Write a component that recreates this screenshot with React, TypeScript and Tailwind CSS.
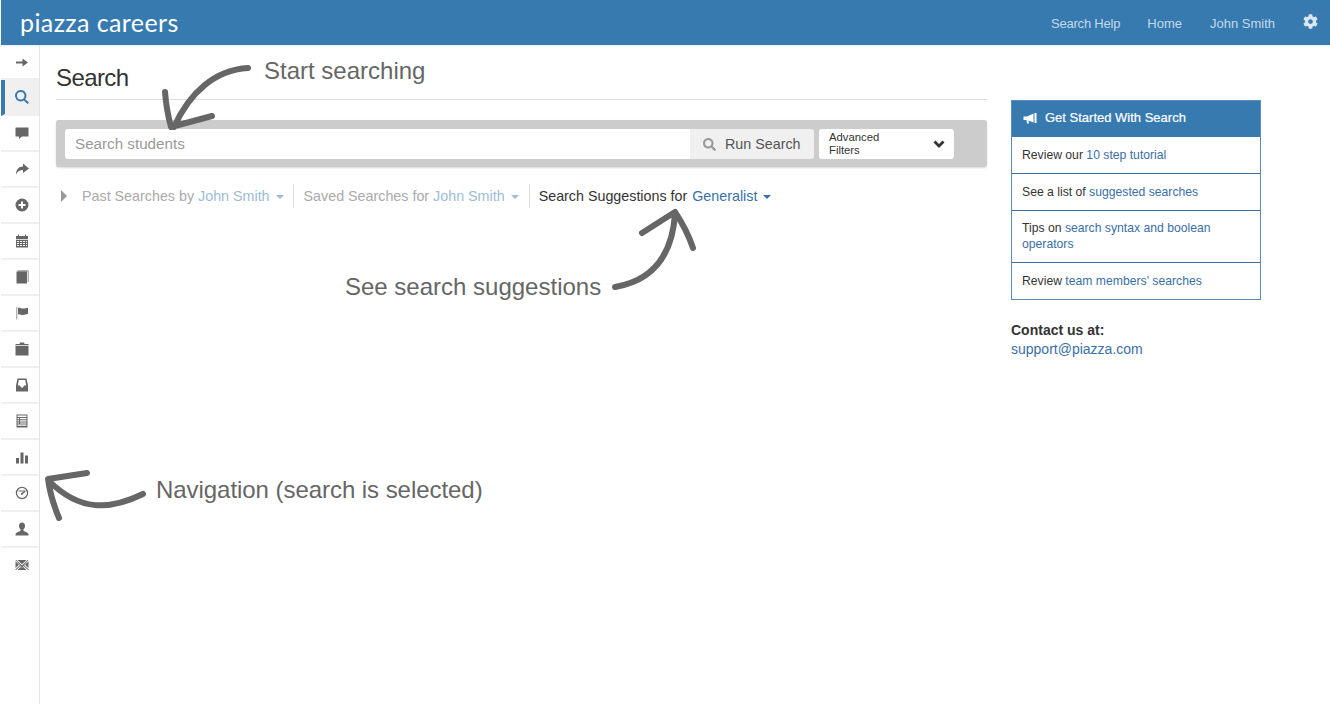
import { FaCog, FaSearch } from 'react-icons/fa';

const Icon = ({ d, active }: { d: string; active?: boolean }) => (
    <svg width="14" height="14" viewBox="0 0 14 14" className={active ? 'text-[#377ab0]' : 'text-[#666666]'}>
        <path d={d} fill="currentColor" fillRule="evenodd" />
    </svg>
);

const navIcons = [
    'M1 5.500h6.500V2.500l5.500 4-5.500 4V7.500H1z',
    'M5.700 0a5.700 5.700 0 0 1 4.500 9.200L14 12.600 12.500 14 8.800 10.500A5.700 5.700 0 1 1 5.700 0zm0 2a3.700 3.700 0 1 0 0 7.400 3.700 3.700 0 0 0 0-7.400z',
    'M1 1.500h12a.5.5 0 0 1 .5.5v8a.5.500 0 0 1-.5.500H7L4 13v-2.500H1a.5.500 0 0 1-.5-.500V2a.5.500 0 0 1 .5-.500z',
    'M8 1.500 14 6.500 8 11V8C5 8 2.500 9 1 12.500 1 8 3.500 4.500 8 4.500z',
    'M7 .5a6.500 6.500 0 1 1 0 13 6.500 6.500 0 0 1 0-13zM6 3.500V6H3.500v2H6v2.500h2V8h2.500V6H8V3.500z',
    'M1 2h2V.5h1V2h6V.5h1V2h2v3H1zM1 5.700h12V13.500H1zM2 7v1h2V7zm3 0v1h2V7zm3 0v1h2V7zm3 0v1h1V7zM2 9v1h2V9zm3 0v1h2V9zm3 0v1h2V9zm3 0v1h1V9zM2 11v1h2v-1zm3 0v1h2v-1zm3 0v1h2v-1zm3 0v1h1v-1z',
    'M2.500.5H13.500V12h-.7V1.200H2.500zM1.500 1.500h10.500v12H1.500z',
    'M1.500 1h.7v12.500h-.7zM3 2c2-1 3.500 1 6 .5 1-.2 2-.5 4-.8v6.300c-2 .3-3 .7-4.500 1C6 9.500 5 7.500 3 8.500z',
    'M5 .5h4l.5 1.500H13.500v1H.5V2h4zM.5 3.700h13V13.500H.5z',
    'M1 7.500 2.500.5h9L13 7.500V13.500H1zM3.800 2 2.800 7.500H5L6 9.500H8L9 7.500h2.200L10.200 2z',
    'M1.500.5h11V13.500H1.500zM2.500 1.500V3h9V1.500zM2.500 4v1.200h1.500V4zm2.500 0v1.200h6.500V4zM2.500 6.200v1.200h1.500V6.200zm2.500 0v1.200h6.500V6.200zM2.500 8.400v1.200h1.500V8.400zm2.500 0v1.200h6.500V8.400zM2.500 10.600v1.200h9v-1.200z',
    'M1 8h3v5.500H1zM5.500 2.500h3v11h-3zM10 5.500h3v8h-3z',
    'M7 .8a6.200 6.200 0 1 1 0 12.400A6.200 6.200 0 0 1 7 .8zm0 1.300a4.900 4.900 0 1 0 0 9.800 4.900 4.900 0 0 0 0-9.800zM3.500 4.500h7v1.200L7.800 8a1 1 0 1 1-1.300-.9L9 5.500H3.500z',
    'M7 .5c2 0 3 1.500 3 3.500 0 1.500-.7 2.700-1.500 3.300V9c2 .6 4.500 1.500 5 3.200v1.300H.5v-1.300C1 10.500 3.500 9.600 5.500 9V7.300C4.700 6.700 4 5.500 4 4 4 2 5 .5 7 .5z',
    'M.5 2h.8L7 7.500 12.700 2h.8L9 7.300l4.500 3.900v.8H13L8.500 8 7 9.500 5.500 8 1 12H.5v-.8l4.500-3.900zM2.500 2h9L7 6.300zM.5 3.200 4 6.800.5 10zM13.500 3.200V10L10 6.800zM2.500 12 6 8.800 7 10l1-1.200L11.500 12z',
];

const Caret = ({ className }: { className: string }) => (
    <span className={`inline-block w-0 h-0 border-x-[4px] border-x-transparent border-t-[4px] ml-[6px] align-middle ${className}`} />
);

const App = () => {
    return (
        <div className="relative h-[704px] w-[1330px] overflow-hidden bg-white pl-px font-['Liberation_Sans',sans-serif]">
            <header className="flex h-[45px] items-center justify-between bg-[#377ab0] pl-[19px] pr-[12px] shadow-[0_1px_2px_rgba(0,0,0,0.08)]">
                <span className="font-['Lato',sans-serif] text-[25px] font-normal leading-none tracking-[0.4px] text-white">piazza careers</span>
                <nav className="flex items-center pt-[2px] text-[13px] text-[#c4d8e8]">
                    <span className="tracking-[-0.2px]">Search Help</span>
                    <span className="ml-[27px]">Home</span>
                    <span className="ml-[28px]">John Smith</span>
                    <FaCog className="ml-[28px] mb-[5px] text-[15px] text-[#dbe7f1]" />
                </nav>
            </header>

            <div className="flex h-[659px]">
                <aside className="w-[39px] shrink-0 border-r border-[#e3e3e3]">
                    {navIcons.map((d, i) => (
                        <div
                            key={i}
                            className={`flex items-center justify-center border-b-2 border-[#efefef] last:border-b-0 last:pb-[2px] ${i === 0 ? 'h-[35px] pl-[3px] pt-[2px]' : 'h-[36px]'} ${i === 1 ? 'border-l-[4px] border-l-[#377ab0] bg-[#f0f0f0]' : 'pl-[3px]'}`}
                        >
                            <Icon d={d} active={i === 1} />
                        </div>
                    ))}
                </aside>

                <main className="flex flex-1 pl-[16px]">
                    <div className="w-[931px]">
                        <h1 className="flex h-[55px] items-end border-b border-[#dddddd] pb-[9px] text-[24px] leading-none tracking-[-0.6px] text-[#333333]">Search</h1>

                        <div className="mt-[20px] flex h-[47px] items-center rounded-[3px] bg-[#cccccc] px-[9px] shadow-[0_1px_2px_rgba(0,0,0,0.15)]">
                            <div className="flex h-[30px] w-[625px] items-center rounded-l-[3px] bg-white pl-[10px] pt-[1px] text-[15.200px] text-[#999999]">Search students</div>
                            <div className="flex h-[30px] w-[124px] items-center rounded-r-[3px] bg-[#f0f0f0] pl-[13px] pt-[2px] text-[14.300px] text-[#555555]">
                                <FaSearch className="mr-[9px] text-[13px] text-[#999999]" />
                                Run Search
                            </div>
                            <div className="ml-[5px] flex h-[30px] w-[135px] items-center justify-between rounded-[3px] bg-white pl-[10px] pr-[9px] text-[11.300px] leading-[13px] text-[#333333]">
                                <span className="w-[70px]">Advanced Filters</span>
                                <svg width="12" height="10" viewBox="0 0 12 10" fill="none" stroke="#333333" strokeWidth="2.800">
                                    <path d="M1.500 2.500 6 7l4.500-4.500" />
                                </svg>
                            </div>
                        </div>

                        <div className="mt-[17px] flex h-[24px] items-center text-[14.300px] text-[#aaaaaa]">
                            <span className="ml-[5px] mr-[15px] h-0 w-0 border-y-[6px] border-l-[6px] border-y-transparent border-l-[#999999]" />
                            <span className="border-r border-[#dddddd] pr-[9px] leading-[24px]">
                                Past Searches by <span className="text-[#9dbcd6]">John Smith</span>
                                <Caret className="border-t-[#9dbcd6]" />
                            </span>
                            <span className="border-r border-[#dddddd] pl-[10px] pr-[10px] leading-[24px]">
                                Saved Searches for <span className="text-[#9dbcd6]">John Smith</span>
                                <Caret className="border-t-[#9dbcd6]" />
                            </span>
                            <span className="pl-[9px] leading-[24px] text-[#333333]">
                                Search Suggestions for <span className="ml-px text-[#3a6fa5]">Generalist</span>
                                <Caret className="border-t-[#3a6fa5]" />
                            </span>
                        </div>
                    </div>

                    <div className="ml-[24px] w-[250px] pt-[55px]">
                        <div className="border border-[#5d8bbd] text-[12.200px] leading-[16px] text-[#333333]">
                            <div className="flex h-[36px] items-center bg-[#377ab0] pb-[2px] pl-[11px] text-[13px] font-medium text-white [-webkit-text-stroke:0.2px_white]">
                                <svg width="14" height="13" viewBox="0 0 14 13" className="mr-[8px]" fill="white">
                                    <path d="M.5 4.500H4L10.500 1.500V10.500L5.500 8.500 6 11.500H4L3.500 8H.5zM11.500 1H13.500V11H11.500z" />
                                </svg>
                                Get Started With Search
                            </div>
                            <div className="flex h-[37px] items-center border-b border-[#3a6fa5] px-[10px] pb-[1px]">
                                <span>Review our <span className="text-[#3a6fa5]">10 step tutorial</span></span>
                            </div>
                            <div className="flex h-[37px] items-center border-b border-[#3a6fa5] px-[10px]">
                                <span>See a list of <span className="text-[#3a6fa5]">suggested searches</span></span>
                            </div>
                            <div className="flex h-[52px] flex-col justify-center border-b border-[#3a6fa5] px-[10px] pb-[1px]">
                                <div>Tips on <span className="text-[#3a6fa5]">search syntax and boolean</span></div>
                                <div className="text-[#3a6fa5]">operators</div>
                            </div>
                            <div className="flex h-[36px] items-center px-[10px]">
                                <span>Review <span className="text-[#3a6fa5]">team members' searches</span></span>
                            </div>
                        </div>
                        <div className="mt-[20px] text-[14px] font-bold leading-[20px] text-[#333333]">Contact us at:</div>
                        <div className="text-[14px] leading-[19px] text-[#3a6fa5]">support@piazza.com</div>
                    </div>
                </main>
            </div>

            {/* annotations drawn over the page */}
            <span className="absolute left-[264px] top-[56px] text-[24px] leading-[30px] text-[#666666]">Start searching</span>
            <span className="absolute left-[345px] top-[272px] text-[24px] leading-[30px] text-[#666666]">See search suggestions</span>
            <span className="absolute left-[156px] top-[475px] text-[24px] tracking-[-0.05px] leading-[30px] text-[#666666]">Navigation (search is selected)</span>
            <svg className="pointer-events-none absolute left-0 top-0" width="1330" height="704" fill="none" stroke="#666666" strokeWidth="6" strokeLinecap="round" strokeLinejoin="round">
                <path d="M248 68C215 70 190 92 174 127M165 92C166 105 168 116 171 127L212 116" />
                <path d="M615 287C650 281 672 258 675 214M642 233L675 212C683 224 689 236 693 248" />
                <path d="M143 494C110 510 80 512 49 481M87 473L48 479C50 494 54 506 59 518" />
            </svg>
        </div>
    );
};

export default App;
